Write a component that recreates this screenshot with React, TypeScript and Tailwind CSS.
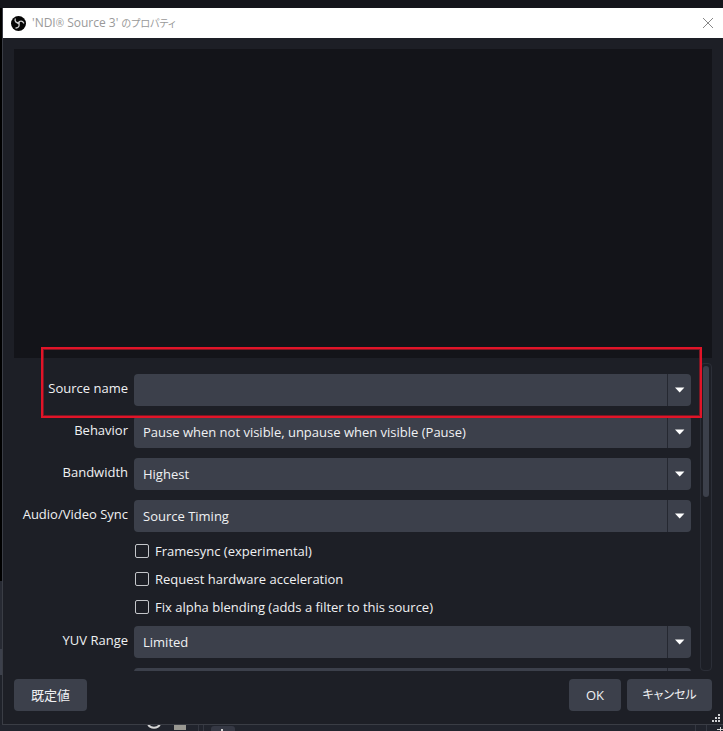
import { useState } from "react";

const selects = [
  { id: "source", label: "Source name", options: [""] },
  {
    id: "behavior",
    label: "Behavior",
    options: ["Pause when not visible, unpause when visible (Pause)"],
  },
  { id: "bandwidth", label: "Bandwidth", options: ["Highest"] },
  { id: "sync", label: "Audio/Video Sync", options: ["Source Timing"] },
];

const checks = [
  { id: "framesync", label: "Framesync (experimental)" },
  { id: "hwaccel", label: "Request hardware acceleration" },
  { id: "alpha", label: "Fix alpha blending (adds a filter to this source)" },
];

function SelectRow({ id, label, options }: { id: string; label?: string; options: string[] }) {
  return (
    <div className="grid grid-cols-[114px_1fr] items-center gap-[6px]">
      <label htmlFor={id} className="pb-1 text-right whitespace-nowrap">
        {label}
      </label>
      <div className="relative h-8">
        <select
          id={id}
          aria-label={label ?? id}
          className="h-8 w-full appearance-none rounded bg-[#3c404b] pr-8 pl-[9px] outline-none"
        >
          {options.map((o) => (
            <option key={o}>{o}</option>
          ))}
        </select>
        <span className="pointer-events-none absolute inset-y-0 right-0 flex w-6 items-center justify-center border-l border-[#252831]">
          <svg width="10" height="6" viewBox="0 0 10 6" fill="#fff">
            <path d="M0 0.5h9.4L4.7 5.5z" />
          </svg>
        </span>
      </div>
    </div>
  );
}

function ObsLogo() {
  return (
    <svg width="15" height="15" viewBox="0 0 30 30" aria-hidden="true">
      <circle cx="15" cy="15" r="15" fill="#050505" />
      <g fill="none" stroke="#d0d0d0" strokeWidth="2.6" strokeLinecap="round">
        <path d="M15 14C10 14 7 10 8.5 6" />
        <path d="M15 14C17 9 23 9 25.5 14" />
        <path d="M15 14C18 18 16 24 10 24" />
      </g>
      <circle cx="15" cy="14" r="2.4" fill="#d0d0d0" />
    </svg>
  );
}

export default function App() {
  const [checked, setChecked] = useState<Record<string, boolean>>({});

  return (
    <div className="flex h-screen min-h-[600px] flex-col overflow-hidden bg-[#14151b] pt-2 font-['Open_Sans','Noto_Sans_CJK_JP',sans-serif] text-[13px] leading-5 text-[#f0f1f3]">
      <div className="flex min-h-0 flex-1">
        {/* メインウィンドウの左端 */}
        <div className="flex w-[2px] shrink-0 flex-col bg-black">
          <div className="mt-auto h-[68px] bg-[#272a33]" />
          <div className="h-[26px] bg-[#3c404b]" />
          <div className="h-[50px] bg-[#1f222a]" />
        </div>

        <div className="flex min-w-0 flex-1 flex-col border-b border-l border-[#3a3d45] bg-[#1d1f26]">
          <header className="flex h-[30px] shrink-0 items-center justify-between bg-white pr-[9px] pl-2">
            <div className="flex items-center gap-[6px]">
              <ObsLogo />
              <h1 className="text-[12px] text-[#999] [font-feature-settings:'palt']">
                'NDI<span className="text-[10px]">®</span> Source 3'{" "}
                <span className="text-[10px]">のプロパティ</span>
              </h1>
            </div>
            <button type="button" aria-label="閉じる">
              <svg width="12" height="12" viewBox="0 0 12 12" fill="none" stroke="#888">
                <path d="M1 1l10 10M11 1L1 11" />
              </svg>
            </button>
          </header>

          {/* プレビュー */}
          <div className="mx-[11px] mt-[11px] min-h-0 flex-1 bg-[#131419]" />

          {/* プロパティ一覧 */}
          <div className="relative mt-[5px] mr-[11px] ml-[11px] flex h-[308px] shrink-0 gap-[9px]">
            <div className="flex min-w-0 flex-1 flex-col gap-[10px] overflow-hidden pt-[11px]">
              {selects.map((s) => (
                <SelectRow key={s.id} {...s} />
              ))}
              <div className="-my-[1px] flex flex-col gap-2 pl-[121px]">
                {checks.map((c) => (
                  <div key={c.id} className="flex items-center gap-[6px]">
                    <input
                      id={c.id}
                      type="checkbox"
                      className="size-[14px] appearance-none rounded-[2px] border border-[#c4c6ca] checked:bg-[#718cdc]"
                      checked={!!checked[c.id]}
                      onChange={(e) => setChecked({ ...checked, [c.id]: e.target.checked })}
                    />
                    <label htmlFor={c.id}>{c.label}</label>
                  </div>
                ))}
              </div>
              <SelectRow id="yuv" label="YUV Range" options={["Limited"]} />
              <SelectRow id="colorspace" options={[""]} />
            </div>

            <div className="w-3 shrink-0 rounded border border-[#2b2e37] p-[2px]">
              <div className="h-[131px] w-[6px] rounded-[3px] bg-[#3c404b]" />
            </div>

            <div className="pointer-events-none absolute -top-4 right-[10px] left-[27px] h-[71px] border-2 border-[#e11428] shadow-[inset_0_0_0_1px_#7c1824]" />
          </div>

          <footer className="relative mt-2 flex shrink-0 gap-[6px] px-[11px] pb-[13px]">
            <button type="button" className="mr-auto h-8 rounded bg-[#3c404b] px-[17px]">
              既定値
            </button>
            <button type="button" className="h-8 rounded bg-[#3c404b] px-[17px]">
              OK
            </button>
            <button
              type="button"
              className="h-8 w-[85px] rounded bg-[#3c404b] text-[12px] [font-feature-settings:'palt']"
            >
              キャンセル
            </button>
            <svg
              className="absolute right-[3px] bottom-[2px]"
              width="8"
              height="8"
              viewBox="0 0 8 8"
              fill="#d0d1d4"
            >
              <path d="M6 0h2v2H6zM3 3h2v2H3zM6 3h2v2H6zM0 6h2v2H0zM3 6h2v2H3zM6 6h2v2H6z" />
            </svg>
          </footer>
        </div>
      </div>

      {/* 背面のドック下端 */}
      <div className="flex h-[6px] shrink-0 overflow-hidden bg-[#21242d]">
        <div className="flex w-[199px] items-start gap-[13px] border-r border-[#343741] pl-[147px]">
          <svg width="14" height="4" viewBox="0 0 14 4" fill="none" stroke="#d5d5d5" strokeWidth="2">
            <path d="M1 -1C3 4 11 4 13 -1" />
          </svg>
          <div className="h-[5px] w-3 bg-[#999892]" />
        </div>
        <div className="ml-1 flex flex-1 justify-between border-l border-[#343741] pl-[7px]">
          <svg width="24" height="6" viewBox="0 0 24 6">
            <path d="M0 6V4q0-3 3-3h18q3 0 3 3v2z" fill="#353844" />
            <path d="M10 4h2v2h-2z" fill="#d5d5d5" />
          </svg>
          <div className="mr-[9px] w-3 border-x border-[#343741]" />
        </div>
        <svg width="7" height="6" viewBox="0 0 7 6" stroke="#d5d5d5">
          <path d="M1 4.5h6M4.5 2v4" />
        </svg>
      </div>
    </div>
  );
}
